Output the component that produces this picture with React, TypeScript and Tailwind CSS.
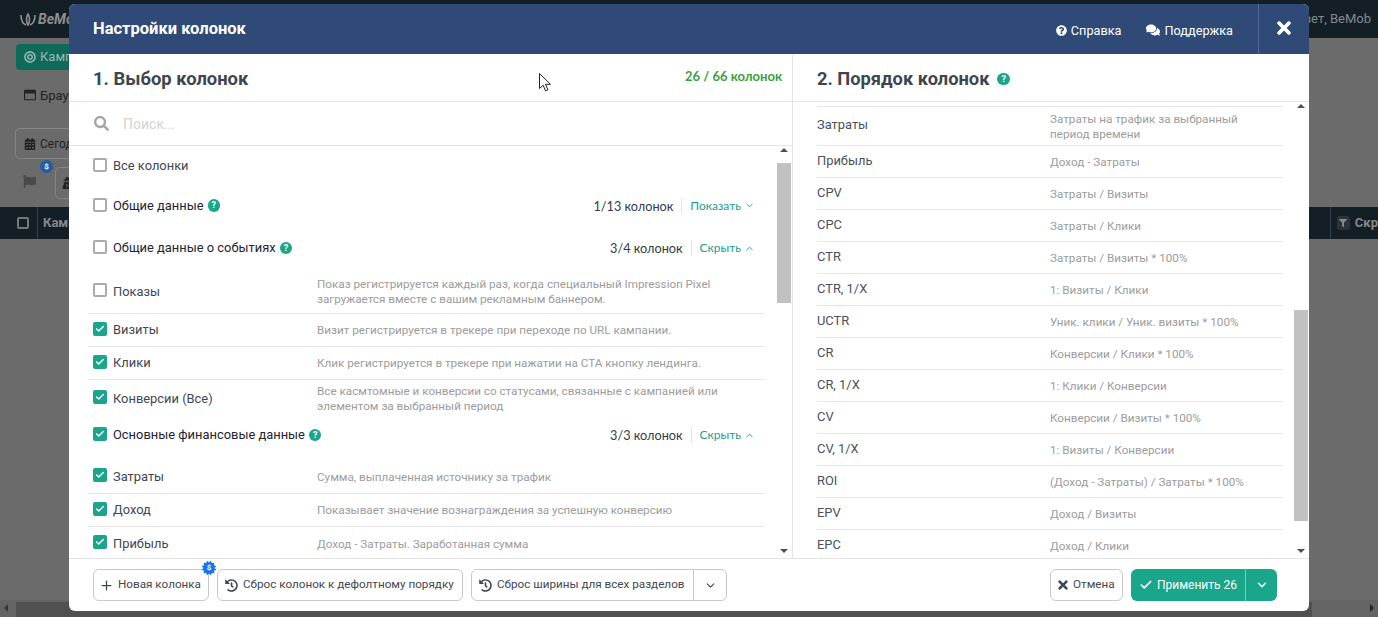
import React from "react";
import { Check, ChevronDown, ChevronUp, Plus } from "lucide-react";
import { FaBullseye, FaCalendarAlt, FaCertificate, FaComments, FaFilter, FaFlag, FaHistory, FaQuestionCircle, FaRegWindowMaximize, FaSearch, FaTimes, FaUserSecret } from "react-icons/fa";

const Help = () => (
  <span className="flex items-center justify-center w-[12.5px] h-[12.5px] rounded-full bg-[#19a68a] text-white font-bold text-[9px] leading-none shrink-0">
    ?
  </span>
);

const Box = ({ on }: { on?: boolean }) =>
  on ? (
    <span className="w-[14px] h-[14px] -mt-[2px] rounded-[2px] bg-[#19a68a] flex items-center justify-center shrink-0">
      <Check size={10} strokeWidth={3.5} className="text-white" />
    </span>
  ) : (
    <span className="w-[14px] h-[14px] -mt-[2px] rounded-[2px] border-2 border-[#ababab] bg-white shrink-0" />
  );

const Group = ({ h, on, label, count, action, open }: { h: string; on?: boolean; label: string; count: string; action: string; open?: boolean }) => (
  <div className={`flex items-center pl-[24px] pr-[22px] ${h}`}>
    <Box on={on} />
    <span className="ml-[6px] text-[12.9px] text-[#1c2530]">{label}</span>
    <span className="ml-[4px]"><Help /></span>
    <div className="ml-auto flex items-center" style={{ fontFamily: "Lato, Roboto, sans-serif" }}>
      <span className="text-[12.7px] text-[#333b44] pr-[8px] border-r border-[#e4e4e4] leading-[16px]">{count}</span>
      <span className="pl-[8px] text-[#19a08a] text-[12px] flex items-center gap-[3px]">
        {action}
        {open ? <ChevronUp size={11} /> : <ChevronDown size={11} />}
      </span>
    </div>
  </div>
);

const Row = ({ h, on, label, desc, line = true }: { h: string; on?: boolean; label: string; desc: string; line?: boolean }) => (
  <div className={`flex items-center ml-[19px] mr-[12px] pl-[5px] ${h} ${line ? "border-b border-[#e6e6e6]" : ""}`}>
    <div className="flex items-center w-[224px] shrink-0">
      <Box on={on} />
      <span className="ml-[6px] text-[12.9px] text-[#3f4851]">{label}</span>
    </div>
    <span className="mt-[1px] text-[11.7px] leading-[15px] text-[#9c9c9c] w-[420px]">{desc}</span>
  </div>
);

const orderRows = [
  ["Затраты", "Затраты на трафик за выбранный период времени", "h-[39px]"],
  ["Прибыль", "Доход - Затраты", "h-[32px]"],
  ["CPV", "Затраты / Визиты", "h-[32px]"],
  ["CPC", "Затраты / Клики", "h-[32px]"],
  ["CTR", "Затраты / Визиты * 100%", "h-[32px]"],
  ["CTR, 1/X", "1: Визиты / Клики", "h-[32px]"],
  ["UCTR", "Уник. клики / Уник. визиты * 100%", "h-[32px]"],
  ["CR", "Конверсии / Клики * 100%", "h-[32px]"],
  ["CR, 1/X", "1: Клики / Конверсии", "h-[32px]"],
  ["CV", "Конверсии / Визиты * 100%", "h-[32px]"],
  ["CV, 1/X", "1: Визиты / Конверсии", "h-[32px]"],
  ["ROI", "(Доход - Затраты) / Затраты * 100%", "h-[32px]"],
  ["EPV", "Доход / Визиты", "h-[32px]"],
  ["EPC", "Доход / Клики", "h-[32px]"],
];

const Scrollbar = ({ top, height }: { top: number; height: number }) => (
  <div className="w-[15px] shrink-0 relative bg-white">
    <div className="absolute top-[2px] left-[3px] w-0 h-0 border-x-[4px] border-x-transparent border-b-[4px] border-b-[#505050]" />
    <div className="absolute left-0 w-[14px] bg-[#c1c1c1]" style={{ top, height }} />
    <div className="absolute bottom-[5px] left-[3px] w-0 h-0 border-x-[4px] border-x-transparent border-t-[4px] border-t-[#505050]" />
  </div>
);

const OutlineBtn = ({ children, className = "" }: { children: React.ReactNode; className?: string }) => (
  <div className={`h-[32px] border border-[#c9c9c9] rounded-[6px] flex items-center text-[11.7px] text-[#3f4851] bg-white whitespace-nowrap ${className}`}>
    {children}
  </div>
);

export default function App() {
  return (
    <div className="relative w-[1378px] h-[617px] overflow-hidden bg-[#6b6b6b] flex flex-col" style={{ fontFamily: "Roboto, 'Noto Sans', sans-serif" }}>
      {/* page behind the overlay */}
      <div className="h-[38px] shrink-0 bg-[#141e25] flex items-center justify-between pl-[20px] pr-[7px] text-[13px] text-[#85898c]">
        <span className="italic font-bold text-[14px] text-[#8f8f8f] flex items-center gap-[2px]">
          <svg width="16" height="13" viewBox="0 0 16 13" fill="none" stroke="#8f8f8f" strokeWidth="1.6">
            <path d="M1 2c0 6 2 9 5 10M15 2c0 6-2 9-5 10M8 1c-2 3-2 8 0 11c2-3 2-8 0-11z" />
          </svg>
          BeMob
        </span>
        <span>Привет, BeMob</span>
      </div>
      <div className="pl-[16px] pt-[6px] h-[38px] shrink-0">
        <div className="w-[70px] h-[26px] rounded-[4px] bg-[#0f6b59] flex items-center pl-[8px] gap-[4px] text-[13px] text-[#9ab9b2]">
          <FaBullseye size={12} />Камп
        </div>
      </div>
      <div className="pl-[24px] h-[52px] shrink-0 text-[13px] text-[#222] pt-[10px] flex items-start gap-[4px]">
        <FaRegWindowMaximize size={12} className="mt-[3px]" />Брау
      </div>
      <div className="pl-[15px] h-[32px] shrink-0">
        <div className="w-[60px] h-[31px] border border-[#868686] rounded-[5px] flex items-center pl-[8px] gap-[4px] text-[12px] text-[#222]">
          <FaCalendarAlt size={12} />Сегод
        </div>
      </div>
      <div className="pl-[23px] h-[47px] shrink-0 pt-[7px] flex items-start text-[#4a4a4a]">
        <FaFlag size={13} className="mt-[8px]" />
        <div className="relative ml-[19px] w-[24px] h-[32px] border border-[#868686] rounded-l-[5px] flex items-center pl-[6px] text-[#222]">
          <FaUserSecret size={12} />
          <span className="absolute -top-[8px] -left-[16px] w-[13px] h-[13px] rounded-full bg-[#1f5fa8] text-white text-[8px] font-bold flex items-center justify-center">$</span>
        </div>
      </div>
      <div className="h-[32px] shrink-0 bg-[#141e25] flex items-center justify-between pl-[17px] text-[13px] font-bold text-[#85898c]">
        <span className="flex items-center h-full">
          <span className="w-[12px] h-[12px] border-2 border-[#777] rounded-[2px]" />
          <span className="ml-[8px] pl-[5px] h-full flex items-center border-l border-[#33404a]">Камп</span>
        </span>
        <span className="w-[48px] h-full pl-[6px] flex items-center gap-[5px] border-l border-[#33404a]">
          <span className="w-[14px] h-[14px] rounded-[3px] bg-[#2c3339] flex items-center justify-center"><FaFilter size={8} /></span>
          Скр
        </span>
      </div>
      <div className="mt-auto h-[17px] shrink-0 bg-[#646464] relative">
        <div className="absolute top-[2px] left-[16px] w-[1296px] h-[15px] bg-[#505050]" />
        <div className="absolute top-[4px] left-[4px] w-0 h-0 border-y-[4px] border-y-transparent border-r-[4px] border-r-[#3a3a3a]" />
        <div className="absolute top-[4px] right-[4px] w-0 h-0 border-y-[4px] border-y-transparent border-l-[4px] border-l-[#222]" />
      </div>

      {/* modal */}
      <div className="absolute left-[69px] top-[4px] w-[1240px] h-[607px] rounded-[6px] bg-white overflow-hidden flex flex-col">
        <div className="h-[50px] bg-[#304a77] flex items-center shrink-0 text-white">
          <span className="ml-[24px] mt-[1px] text-[16.5px] font-bold">Настройки колонок</span>
          <div className="ml-auto flex items-center text-[12.7px]">
            <span className="flex items-center gap-[4px] mt-[3px]">
              <FaQuestionCircle size={11} />
              Справка
            </span>
            <span className="flex items-center gap-[4px] ml-[25px] mt-[3px]">
              <FaComments size={14} />
              Поддержка
            </span>
            <div className="ml-[25px] w-[51px] h-[50px] border-l border-[#4f6a96] flex items-center justify-center">
              <FaTimes size={20} className="-mt-[3px]" />
            </div>
          </div>
        </div>

        <div className="flex-1 flex min-h-0">
          {/* left column */}
          <div className="w-[724px] border-r border-[#e4e4e4] flex flex-col min-h-0">
            <div className="h-[48px] shrink-0 border-b border-[#e4e4e4] flex items-center justify-between pl-[24px] pr-[10px]">
              <span className="text-[18.4px] font-bold text-[#3d464f] mt-[2px]">1. Выбор колонок</span>
              <span className="text-[13px] font-bold text-[#3aa03d] -mt-[1px]" style={{ fontFamily: "Lato, Roboto, sans-serif" }}>26 / 66 колонок</span>
            </div>
            <div className="h-[44px] shrink-0 border-b border-[#e4e4e4] flex items-center pl-[25px]">
              <FaSearch size={15} className="text-[#a5a5a5]" />
              <span className="ml-[14px] mt-[1px] text-[14px] text-[#d3d3d3]">Поиск...</span>
            </div>
            <div className="flex-1 flex min-h-0">
              <div className="flex-1 min-w-0 overflow-hidden">
                <div className="h-[39px] flex items-center pl-[24px]">
                  <Box />
                  <span className="ml-[6px] text-[12.9px] text-[#3f4851]">Все колонки</span>
                </div>
                <Group h="h-[41px]" label="Общие данные" count="1/13 колонок" action="Показать" />
                <Group h="h-[44px]" label="Общие данные о событиях" count="3/4 колонок" action="Скрыть" open />
                <Row h="h-[44px]" label="Показы" desc="Показ регистрируется каждый раз, когда специальный Impression Pixel загружается вместе с вашим рекламным баннером." />
                <Row h="h-[33px]" on label="Визиты" desc="Визит регистрируется в трекере при переходе по URL кампании." />
                <Row h="h-[33px]" on label="Клики" desc="Клик регистрируется в трекере при нажатии на CTA кнопку лендинга." />
                <Row h="h-[37px]" on line={false} label="Конверсии (Все)" desc="Все касмтомные и конверсии со статусами, связанные с кампанией или элементом за выбранный период" />
                <Group h="h-[36px]" on label="Основные финансовые данные" count="3/3 колонок" action="Скрыть" open />
                <Row h="h-[41px] pt-[7px]" on label="Затраты" desc="Сумма, выплаченная источнику за трафик" />
                <Row h="h-[33px]" on label="Доход" desc="Показывает значение вознаграждения за успешную конверсию" />
                <Row h="h-[33px]" on line={false} label="Прибыль" desc="Доход - Затраты. Заработанная сумма" />
              </div>
              <Scrollbar top={17} height={140} />
            </div>
          </div>

          {/* right column */}
          <div className="flex-1 flex flex-col min-h-0">
            <div className="h-[48px] shrink-0 border-b border-[#e4e4e4] flex items-center pl-[24px]">
              <span className="text-[18.3px] font-bold text-[#3d464f] mt-[2px]">2. Порядок колонок</span>
              <span className="ml-[8px] mt-[3px]"><Help /></span>
            </div>
            <div className="flex-1 flex min-h-0">
              <div className="flex-1 min-w-0 overflow-hidden pt-[4px] pl-[24px] pr-[11px]">
                <div className="border-t border-[#e6e6e6]">
                  {orderRows.map(([name, formula, h]) => (
                    <div key={name} className={`flex items-center border-b border-[#e6e6e6] ${h}`}>
                      <span className="w-[233px] shrink-0 -mt-[2px] text-[12.9px] text-[#4a525a]">{name}</span>
                      <span className="mt-[1px] text-[11.7px] leading-[15px] text-[#9c9c9c] w-[205px]">{formula}</span>
                    </div>
                  ))}
                </div>
              </div>
              <Scrollbar top={208} height={211} />
            </div>
          </div>
        </div>

        {/* footer */}
        <div className="h-[53px] shrink-0 border-t border-[#e4e4e4] flex items-center pl-[24px] pr-[32px]">
          <div className="relative">
            <OutlineBtn className="w-[116px] pl-[5px] gap-[4px]"><Plus size={15} />Новая колонка</OutlineBtn>
            <span className="absolute -top-[8px] -right-[7px] w-[14px] h-[14px] text-[#1a73e8] flex items-center justify-center">
              <FaCertificate size={14} />
              <span className="absolute text-white text-[8px] font-bold leading-none">$</span>
            </span>
          </div>
          <OutlineBtn className="ml-[8px] w-[246px] pl-[7px] gap-[5px]"><FaHistory size={13} />Сброс колонок к дефолтному порядку</OutlineBtn>
          <OutlineBtn className="ml-[8px] w-[256px] pl-[7px] gap-[5px]">
            <FaHistory size={13} />
            <span className="flex-1">Сброс ширины для всех разделов</span>
            <span className="w-[33px] h-full border-l border-[#c9c9c9] flex items-center justify-center"><ChevronDown size={13} /></span>
          </OutlineBtn>
          <OutlineBtn className="ml-auto w-[73px] pl-[5px] gap-[3px]"><FaTimes size={14} />Отмена</OutlineBtn>
          <div className="ml-[8px] h-[32px] w-[146px] rounded-[6px] bg-[#19a68a] flex items-center text-white text-[12px]">
            <span className="flex-1 flex items-center justify-center gap-[4px]">
              <Check size={14} strokeWidth={3} />Применить 26
            </span>
            <span className="w-[32px] h-full border-l border-[#7ccab9] flex items-center justify-center"><ChevronDown size={14} strokeWidth={2.5} /></span>
          </div>
        </div>
      </div>

      {/* mouse pointer */}
      <svg className="absolute left-[538px] top-[72px]" width="15" height="21" viewBox="0 0 15 21" fill="white" stroke="#222" strokeWidth="1">
        <path d="M1.5 1.5v15l3.6-3.3 2.4 5.6 2.4-1-2.4-5.5h5z" />
      </svg>
    </div>
  );
}
